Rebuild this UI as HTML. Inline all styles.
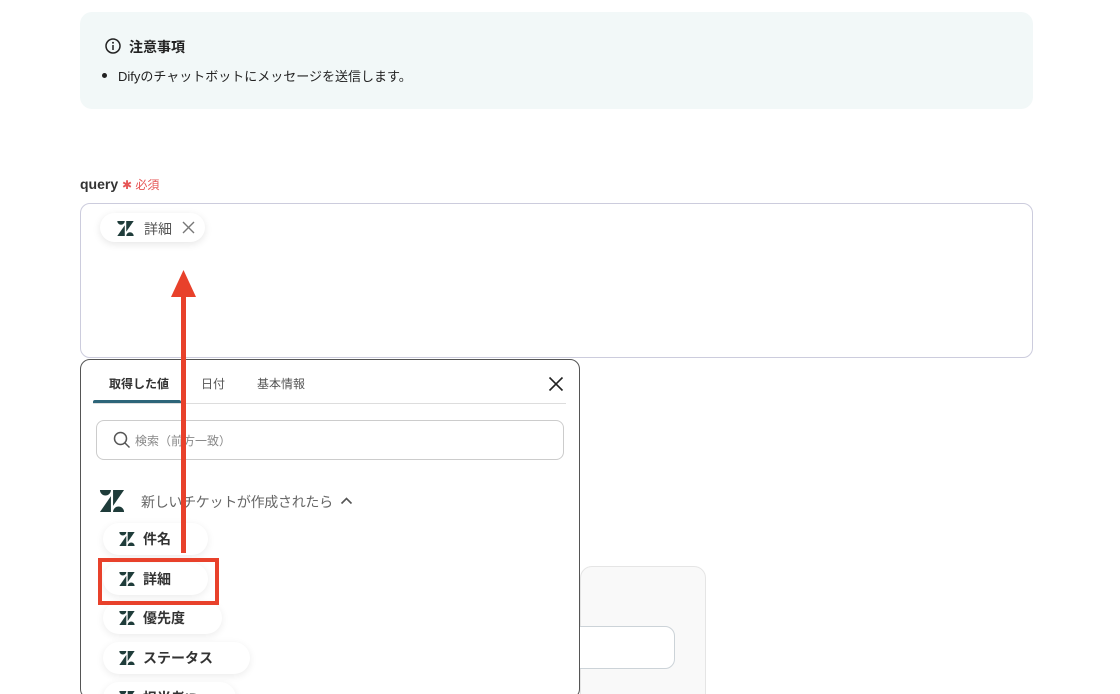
<!DOCTYPE html><html><head><meta charset="utf-8"><style>
*{box-sizing:border-box;margin:0;padding:0}
html,body{width:1120px;height:694px;overflow:hidden}
body{background:#fff;font-family:"Liberation Sans","Noto Sans CJK JP",sans-serif;color:#333;position:relative}
.a{position:absolute}
.pill{position:absolute;left:103px;height:32px;background:#fff;border-radius:16px;box-shadow:0 2px 8px rgba(0,0,0,.08);display:flex;align-items:center;padding-left:16px;font-size:14px;font-weight:bold;color:#333}
.pill svg{margin-right:8px}
</style></head><body>
<svg width="0" height="0" style="position:absolute"><defs><g id="z" fill="#1f3c3a"><path d="M13 7.3V26H0z M13 0a6.5 6.5 0 0 1-13 0z M15.5 26a6.5 6.5 0 0 1 13 0z M15.5 18.7V0H28.5z"/></g></defs></svg>
<div class="a" style="left:80px;top:12px;width:953px;height:97px;background:#f2f8f8;border-radius:12px"></div>
<svg class="a" style="left:105px;top:38px" width="16" height="16" viewBox="0 0 16 16"><circle cx="8" cy="8" r="7" fill="none" stroke="#222" stroke-width="1.5"/><rect x="7.25" y="7" width="1.5" height="5" fill="#222"/><circle cx="8" cy="4.8" r="1" fill="#222"/></svg>
<div class="a" style="left:129px;top:37px;font-size:14px;font-weight:bold;color:#222">注意事項</div>
<div class="a" style="left:102px;top:73px;width:5px;height:5px;border-radius:50%;background:#222"></div>
<div class="a" style="left:118px;top:66px;font-size:13px;color:#222">Difyのチャットボットにメッセージを送信します。</div>
<div class="a" style="left:80px;top:176px;font-size:14px;font-weight:bold;color:#333">query <span style="color:#e65555;font-weight:normal;font-size:12px">✱ 必須</span></div>
<div class="a" style="left:80px;top:203px;width:953px;height:155px;border:1px solid #ccd;border-radius:10px"></div>
<div class="a" style="left:100px;top:213px;width:105px;height:29px;background:#fff;border-radius:15px;box-shadow:0 2px 8px rgba(0,0,0,.1)"></div>
<svg class="a" style="left:117px;top:221px" width="17" height="15" viewBox="0 0 28.5 26"><use href="#z"/></svg>
<div class="a" style="left:144px;top:219px;font-size:14px;color:#555">詳細</div>
<svg class="a" style="left:182px;top:221px" width="13" height="13" viewBox="0 0 13 13"><path d="M1 1L12 12M12 1L1 12" stroke="#777" stroke-width="1.4"/></svg>
<div class="a" style="left:580px;top:566px;width:126px;height:140px;background:#f9f9f9;border:1px solid #e5e5e5;border-radius:12px"></div>
<div class="a" style="left:560px;top:626px;width:115px;height:43px;background:#fff;border:1px solid #ccd3d8;border-radius:10px"></div>
<div class="a" style="left:80px;top:359px;width:500px;height:340px;background:#fff;border:1px solid #555;border-radius:10px"></div>
<div class="a" style="left:109px;top:375px;font-size:12px;font-weight:bold;color:#333">取得した値</div>
<div class="a" style="left:201px;top:375px;font-size:12px;color:#555">日付</div>
<div class="a" style="left:257px;top:375px;font-size:12px;color:#555">基本情報</div>
<svg class="a" style="left:548px;top:376px" width="16" height="16" viewBox="0 0 16 16"><path d="M1.5 1.5L14.5 14.5M14.5 1.5L1.5 14.5" stroke="#222" stroke-width="1.6"/></svg>
<div class="a" style="left:93px;top:403px;width:473px;height:1px;background:#ddd"></div>
<div class="a" style="left:93px;top:400px;width:88px;height:3px;background:#2d6579;border-radius:2px 2px 0 0"></div>
<div class="a" style="left:96px;top:420px;width:468px;height:40px;border:1px solid #ccc;border-radius:8px"></div>
<svg class="a" style="left:113px;top:431px" width="18" height="18" viewBox="0 0 18 18"><circle cx="7.5" cy="7.5" r="6" fill="none" stroke="#555" stroke-width="1.5"/><path d="M12 12L16.5 16.5" stroke="#555" stroke-width="1.5"/></svg>
<div class="a" style="left:135px;top:432px;font-size:12px;color:#888">検索（前方一致）</div>
<svg class="a" style="left:99px;top:490px" width="26" height="22" viewBox="0 0 28.5 26"><use href="#z"/></svg>
<div class="a" style="left:141px;top:492px;font-size:14px;color:#666;letter-spacing:-.3px">新しいチケットが作成されたら</div>
<svg class="a" style="left:340px;top:497px" width="13" height="8" viewBox="0 0 13 8"><path d="M1.5 6.5L6.5 1.5L11.5 6.5" fill="none" stroke="#555" stroke-width="1.6"/></svg>
<div class="pill" style="top:523px;width:105px"><svg width="16" height="14" viewBox="0 0 28.5 26"><use href="#z"/></svg>件名</div>
<div class="pill" style="top:563px;width:105px"><svg width="16" height="14" viewBox="0 0 28.5 26"><use href="#z"/></svg>詳細</div>
<div class="pill" style="top:602px;width:119px"><svg width="16" height="14" viewBox="0 0 28.5 26"><use href="#z"/></svg>優先度</div>
<div class="pill" style="top:642px;width:147px"><svg width="16" height="14" viewBox="0 0 28.5 26"><use href="#z"/></svg>ステータス</div>
<div class="pill" style="top:682px;width:133px"><svg width="16" height="14" viewBox="0 0 28.5 26"><use href="#z"/></svg>担当者ID</div>
<div class="a" style="left:98px;top:558px;width:121px;height:47px;border:4px solid #e8412b"></div>
<div class="a" style="left:181px;top:294px;width:5px;height:259px;background:#e8412b"></div>
<svg class="a" style="left:171px;top:270px" width="25" height="27" viewBox="0 0 25 27"><path d="M12.5 0L25 27H0z" fill="#e8412b"/></svg>
</body></html>
